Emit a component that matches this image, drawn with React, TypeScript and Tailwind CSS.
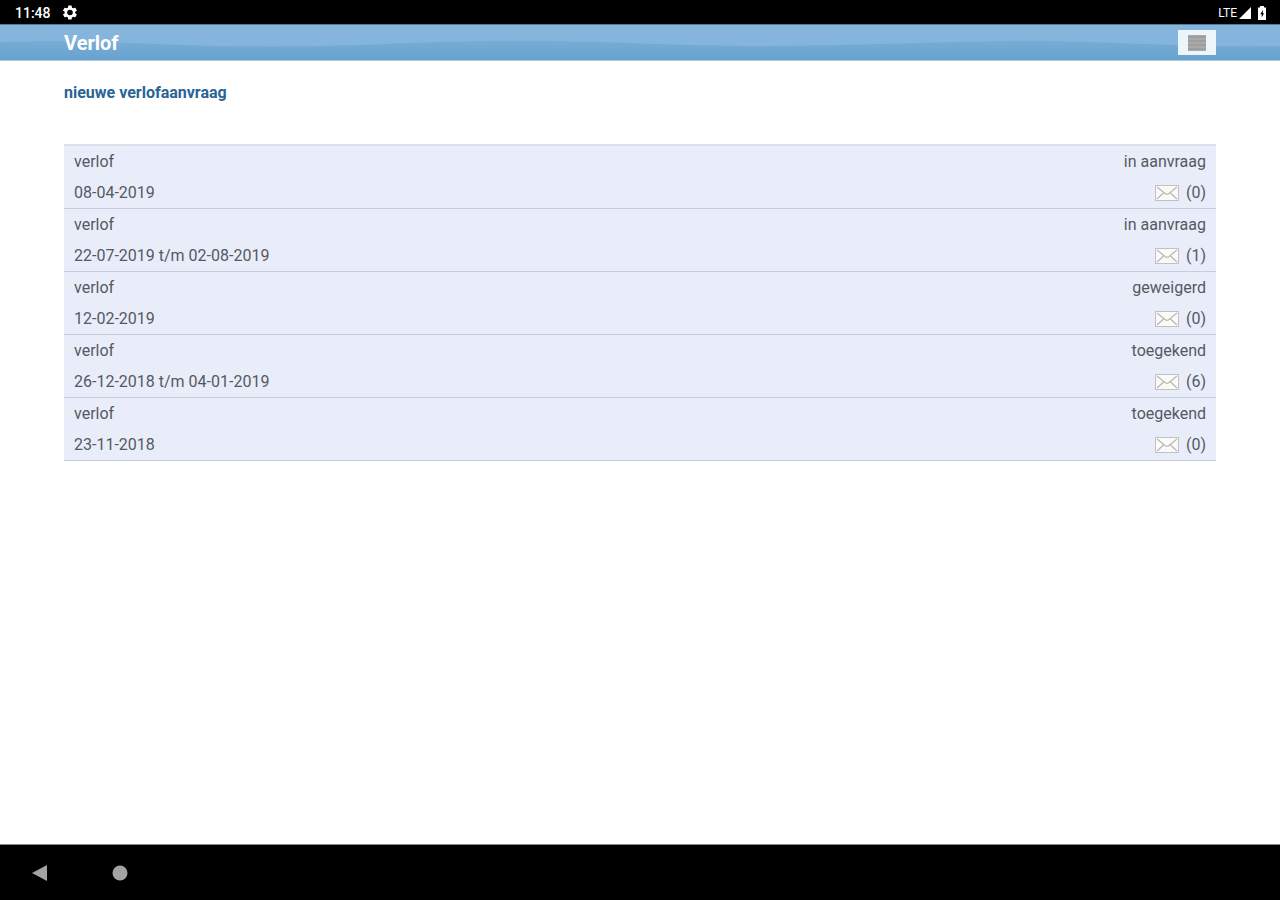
import { useState } from 'react';

interface LeaveRequest {
  id: number;
  type: string;
  period: string;
  status: string;
  messages: number;
}

const requests: LeaveRequest[] = [
  { id: 1, type: 'verlof', period: '08-04-2019', status: 'in aanvraag', messages: 0 },
  { id: 2, type: 'verlof', period: '22-07-2019 t/m 02-08-2019', status: 'in aanvraag', messages: 1 },
  { id: 3, type: 'verlof', period: '12-02-2019', status: 'geweigerd', messages: 0 },
  { id: 4, type: 'verlof', period: '26-12-2018 t/m 04-01-2019', status: 'toegekend', messages: 6 },
  { id: 5, type: 'verlof', period: '23-11-2018', status: 'toegekend', messages: 0 },
];

function EnvelopeIcon() {
  return (
    <svg width="24" height="16" viewBox="0 0 24 16" fill="none" aria-hidden="true">
      <rect x="0.5" y="0.5" width="23" height="15" fill="#fafaf8" stroke="#c0c1c2" />
      <path d="M2 2 10 8.5q2 1.5 4 0L22 2M2 14 8.5 8M22 14 15.5 8" stroke="#b7b8b5" strokeWidth="1.2" />
    </svg>
  );
}

function StatusBar() {
  return (
    <div className="flex h-6 items-center justify-between bg-black pl-[15px] pr-[13px] pt-px text-white">
      <div className="flex items-center gap-3">
        <span className="text-sm font-medium">11:48</span>
        <svg width="14" height="15" viewBox="2 2 20 20" fill="currentColor" aria-hidden="true">
          <path
            fillRule="evenodd"
            d="M19.4 13a7.5 7.5 0 0 0 0-2l2.1-1.6a.5.5 0 0 0 .1-.7l-2-3.4a.5.5 0 0 0-.6-.2l-2.5 1a7 7 0 0 0-1.7-1l-.4-2.6a.5.5 0 0 0-.5-.5h-4a.5.5 0 0 0-.5.5L9 5.1a7 7 0 0 0-1.7 1l-2.5-1a.5.5 0 0 0-.6.2l-2 3.4a.5.5 0 0 0 .1.7L4.5 11a7.5 7.5 0 0 0 0 2l-2.2 1.6a.5.5 0 0 0-.1.7l2 3.4a.5.5 0 0 0 .6.2l2.5-1a7 7 0 0 0 1.7 1l.4 2.6a.5.5 0 0 0 .5.5h4a.5.5 0 0 0 .5-.5l.4-2.6a7 7 0 0 0 1.7-1l2.5 1a.5.5 0 0 0 .6-.2l2-3.4a.5.5 0 0 0-.1-.7zM12 16a4 4 0 1 1 0-8 4 4 0 0 1 0 8z"
          />
        </svg>
      </div>
      <div className="flex items-center gap-[2px]">
        <span className="text-xs">LTE</span>
        <svg width="12" height="12" viewBox="0 0 12 12" fill="currentColor" aria-hidden="true">
          <path d="M12 0v12H0z" />
        </svg>
        <svg className="ml-1" width="10" height="14" viewBox="0 0 10 14" aria-hidden="true">
          <path d="M3 0h4v1.5h2V14H1V1.5h2z" fill="currentColor" />
          <path d="M5.8 4 3.4 8.3h1.3V11.5L7 7.2H5.8z" fill="#000" />
        </svg>
      </div>
    </div>
  );
}

function Header() {
  const [open, setOpen] = useState(false);

  return (
    <header className="relative flex h-[37px] items-center justify-between border-b border-[#b3cadb] bg-[#85b5dc] px-[5%] pt-px">
      {/* Wave behind the title */}
      <svg
        className="absolute inset-0 h-full w-full"
        viewBox="0 0 1280 36"
        preserveAspectRatio="none"
        aria-hidden="true"
      >
        <defs>
          <linearGradient id="wave" x1="0" y1="0" x2="0" y2="1">
            <stop offset="0" stopColor="#76add4" />
            <stop offset="1" stopColor="#68a2d0" />
          </linearGradient>
        </defs>
        <path
          d="M0 18C50 16 110 18 160 20 220 23 300 23 360 21 430 18 490 16 550 17 630 18 680 22 760 22 860 22 960 16 1050 17 1120 18 1170 23 1280 22V36H0z"
          fill="url(#wave)"
        />
        <path d="M0 0H1280V1H0z" fill="#527b99" />
      </svg>
      <h1 className="relative pt-px text-xl font-bold text-white">Verlof</h1>
      <button
        type="button"
        aria-label="Menu"
        aria-expanded={open}
        onClick={() => setOpen(!open)}
        className="relative flex h-[25px] w-[38px] items-center justify-center bg-[#edf5fc]"
      >
        <svg width="18" height="16" viewBox="0 0 18 16" aria-hidden="true">
          <path d="M0 0h18v16H0z" fill="#a9a9a9" />
          <path d="M0 1h18v2H0zM0 5h18v2H0zM0 9h18v2H0zM0 13h18v2H0z" fill="#9e9e9e" />
        </svg>
      </button>
    </header>
  );
}

function RequestRow({ request }: { request: LeaveRequest }) {
  return (
    <li className="border-b border-[#c9cddb] bg-[#e9edfa] px-[10px] leading-[31px]">
      <div className="flex justify-between">
        <span>{request.type}</span>
        <span>{request.status}</span>
      </div>
      <div className="flex justify-between">
        <span>{request.period}</span>
        <span className="flex items-center gap-[7px]">
          <EnvelopeIcon />({request.messages})
        </span>
      </div>
    </li>
  );
}

export default function App() {
  return (
    <div className="flex min-h-screen flex-col bg-white font-['Roboto',sans-serif] text-base text-[#555961]">
      <StatusBar />
      <Header />

      <main className="flex-1 px-[5%] pt-5">
        <a href="#nieuw" className="font-bold leading-6 text-[#2a6496]">
          nieuwe verlofaanvraag
        </a>
        <ul className="mt-[39px] border-t-2 border-[#dcdfe8]">
          {requests.map((request) => (
            <RequestRow key={request.id} request={request} />
          ))}
        </ul>
      </main>

      {/* Android navigation */}
      <nav className="flex h-14 items-center gap-16 border-t border-[#8a8a8a] bg-black pl-8">
        <button type="button" aria-label="Terug">
          <svg width="16" height="18" viewBox="0 0 16 18" aria-hidden="true">
            <path d="M15 1v16L0 9z" fill="#a3a3a3" />
          </svg>
        </button>
        <button type="button" aria-label="Start">
          <svg width="16" height="16" viewBox="0 0 16 16" aria-hidden="true">
            <circle cx="8" cy="8" r="7.5" fill="#a3a3a3" />
          </svg>
        </button>
      </nav>
    </div>
  );
}
